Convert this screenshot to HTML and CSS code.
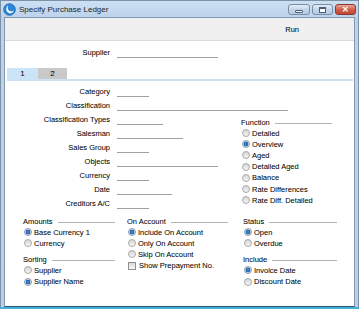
FILE: index.html
```html
<!DOCTYPE html>
<html lang="en">
<head>
    <meta charset="UTF-8">
    <meta name="viewport" content="width=device-width, initial-scale=1.0">
    <title>Specify Purchase Ledger</title>
    <link rel="stylesheet" href="styles.css">
</head>

<body>
    <div class="window">
        <div class="titlebar">
            <svg class="app-icon" width="13" height="13" viewBox="0 0 13 13">
                <circle cx="6.5" cy="6.5" r="5.8" fill="#2d86d8" stroke="#1b5ea6" stroke-width="0.8"/>
                <path d="M5.2 2.2 C2.4 3.8 2.4 9.2 6.6 10.2 C9 10.6 10.6 9.2 11.1 7.6 C9.4 9 6.2 8.9 5.1 6.6 C4.5 5.2 4.5 3.4 5.2 2.2 Z" fill="#fff"/>
            </svg>
            <span class="title">Specify Purchase Ledger</span>
            <div class="caption-buttons">
                <span class="cap-btn cap-min"><span class="min-bar"></span></span>
                <span class="cap-btn cap-max"><span class="max-box"></span></span>
                <span class="cap-btn cap-close">✕</span>
            </div>
        </div>

        <div class="client">
            <div class="toolbar">
                <span>Run</span>
            </div>

            <div class="form">
                <div class="field-grid supplier-row">
                    <label>Supplier</label>
                    <span class="field len-l"></span>
                </div>

                <div class="tabs">
                    <span class="tab active">1</span>
                    <span class="tab">2</span>
                </div>

                <div class="tab-body">
                    <label>Category</label>
                    <span class="field len-xs"></span>
                    <label>Classification</label>
                    <span class="field len-xl wide"></span>
                    <label>Classification Types</label>
                    <span class="field len-s"></span>
                    <label>Salesman</label>
                    <span class="field len-m"></span>
                    <label>Sales Group</label>
                    <span class="field len-xs"></span>
                    <label>Objects</label>
                    <span class="field len-l"></span>
                    <label>Currency</label>
                    <span class="field len-xs"></span>
                    <label>Date</label>
                    <span class="field len-date"></span>
                    <label>Creditors A/C</label>
                    <span class="field len-xs"></span>

                    <div class="group function-group">
                        <div class="group-head">Function</div>
                        <div class="radio">Detailed</div>
                        <div class="radio checked">Overview</div>
                        <div class="radio">Aged</div>
                        <div class="radio">Detailed Aged</div>
                        <div class="radio">Balance</div>
                        <div class="radio">Rate Differences</div>
                        <div class="radio">Rate Diff. Detailed</div>
                    </div>
                </div>

                <div class="groups">
                    <div class="group-col col-amounts">
                        <div class="group">
                            <div class="group-head">Amounts</div>
                            <div class="radio checked">Base Currency 1</div>
                            <div class="radio">Currency</div>
                        </div>
                        <div class="group">
                            <div class="group-head">Sorting</div>
                            <div class="radio">Supplier</div>
                            <div class="radio checked">Supplier Name</div>
                        </div>
                    </div>
                    <div class="group-col col-account">
                        <div class="group">
                            <div class="group-head">On Account</div>
                            <div class="radio checked">Include On Account</div>
                            <div class="radio">Only On Account</div>
                            <div class="radio">Skip On Account</div>
                            <div class="check">Show Prepayment No.</div>
                        </div>
                    </div>
                    <div class="group-col col-status">
                        <div class="group">
                            <div class="group-head">Status</div>
                            <div class="radio checked">Open</div>
                            <div class="radio">Overdue</div>
                        </div>
                        <div class="group">
                            <div class="group-head">Include</div>
                            <div class="radio checked">Invoice Date</div>
                            <div class="radio">Discount Date</div>
                        </div>
                    </div>
                </div>
            </div>
        </div>
    </div>
</body>

</html>
```

FILE: styles.css
```css
body {
    margin: 0;
    font-family: "Liberation Sans", Arial, sans-serif;
    font-size: 7.5px;
    color: #000;
    background-color: #fff;
    -webkit-text-stroke: 0.04px #000;
}

.window {
    width: 359px;
    height: 309px;
    box-sizing: border-box;
    border: 1px solid #7f91a6;
    border-bottom: 2px solid #3eb2da;
    background: linear-gradient(#cde0f3, #bcd3ec 16px, #b9d0ea);
    display: flex;
    flex-direction: column;
    overflow: hidden;
}

/* Title bar */
.titlebar {
    height: 16px;
    flex-shrink: 0;
    display: flex;
    align-items: center;
    padding-left: 2px;
}

.app-icon {
    flex-shrink: 0;
}

.title {
    margin-left: 3px;
    font-size: 8px;
    color: #1e1e1e;
    -webkit-text-stroke: 0;
}

.caption-buttons {
    margin-left: auto;
    margin-right: 2px;
    align-self: flex-start;
    margin-top: 3px;
    display: flex;
    gap: 2px;
}

.cap-btn {
    height: 11px;
    box-sizing: border-box;
    border: 1px solid #7a8ea6;
    border-radius: 3px;
    background: linear-gradient(#e4eef9, #c3d5ea 50%, #b4c9e2);
    display: flex;
    align-items: center;
    justify-content: center;
}

.cap-min {
    width: 22px;
}

.cap-max {
    width: 21px;
}

.cap-close {
    width: 21px;
    border-color: #8a3a32;
    background: linear-gradient(#e9a597, #d2604c 50%, #c24632);
    color: #fff;
    font-size: 8px;
    font-weight: bold;
    line-height: 9px;
    -webkit-text-stroke: 0;
}

.min-bar {
    width: 8px;
    height: 3px;
    margin-top: 3px;
    box-sizing: border-box;
    border: 1px solid #4b5d74;
    border-radius: 1px;
    background-color: #fff;
}

.max-box {
    width: 7px;
    height: 6px;
    box-sizing: border-box;
    border: 1px solid #4b5d74;
    border-top-width: 2px;
    background-color: #fff;
}

/* Client area */
.client {
    flex: 1;
    margin: 0 3px 0 3px;
    border: 1px solid #8297ae;
    border-bottom-color: #30536e;
    background-color: #fff;
    display: flex;
    flex-direction: column;
}

.toolbar {
    height: 22px;
    flex-shrink: 0;
    background-color: #f0f0f0;
    border-bottom: 1px solid #dadada;
    display: flex;
    align-items: center;
    justify-content: flex-end;
    padding-right: 55px;
}

.form {
    padding-top: 5px;
}

.field-grid,
.tab-body {
    display: grid;
    grid-template-columns: 105px 131px 1fr;
    grid-auto-rows: 14px;
}

label {
    grid-column: 1;
    text-align: right;
    line-height: 14px;
    white-space: nowrap;
}

.field {
    grid-column: 2;
    margin-left: 7px;
    height: 11px;
    border-bottom: 1px solid #a0a0a0;
}

.field.wide {
    grid-column: 2 / 4;
}

.len-xs { width: 32px; }
.len-s { width: 46px; }
.len-date { width: 55px; }
.len-m { width: 66px; }
.len-l { width: 101px; }
.len-xl { width: 171px; }

/* Tabs */
.tabs {
    display: flex;
    margin: 8px 1px 0 2px;
    border-bottom: 2px solid #cfe2f5;
}

.tab {
    width: 29px;
    height: 11px;
    line-height: 11px;
    text-align: center;
    font-size: 8px;
    background-color: #c9c9c9;
}

.tab.active {
    width: 31px;
    background-color: #cce4f8;
}

.tab-body {
    margin-top: 4px;
}

/* Option groups */
.group-head {
    height: 11px;
    display: flex;
    align-items: center;
    white-space: nowrap;
}

.group-head::after {
    content: "";
    flex: 1;
    margin-left: 5px;
    margin-top: 3px;
    border-top: 1px solid #b4b4b4;
}

.radio,
.check {
    height: 11.2px;
    display: flex;
    align-items: center;
    white-space: nowrap;
}

.radio::before {
    content: "";
    width: 8px;
    height: 8px;
    box-sizing: border-box;
    margin: 0 2px 0 1px;
    border: 1px solid #a9a9a9;
    border-radius: 50%;
    background: linear-gradient(#d6d6d6, #f6f6f6);
}

.radio.checked::before {
    border-color: #8c9aab;
    background: radial-gradient(circle, #4d9be3 0, #1a5aa6 2px, #cbd6e4 2.6px, #eef2f6 4px);
}

.check::before {
    content: "";
    width: 8px;
    height: 8px;
    box-sizing: border-box;
    margin: 0 3px 0 1px;
    border: 1px solid #8f8f8f;
    background: linear-gradient(#dadada, #f7f7f7);
}

.function-group {
    grid-column: 3;
    grid-row: 3 / span 7;
    width: 91px;
    margin-top: 3.5px;
}

.groups {
    display: flex;
    margin-top: 4.5px;
    padding-left: 18px;
}

.group + .group {
    margin-top: 5px;
}

.col-amounts {
    width: 92px;
    margin-right: 12px;
}

.col-account {
    width: 101px;
    margin-right: 15px;
}

.col-status {
    width: 94px;
}
```
